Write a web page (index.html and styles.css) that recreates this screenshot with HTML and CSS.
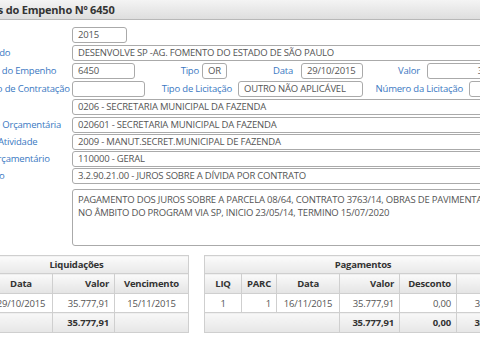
FILE: index.html
```html
<!DOCTYPE html>
<html lang="pt-BR">
<head>
    <meta charset="utf-8" />
    <title>Detalhes do Empenho</title>
    <link rel="stylesheet" href="styles.css">
</head>
<body>
    <div class="page">
        <div class="title-bar">Detalhes do Empenho Nº 6450</div>

        <div class="form">
            <div class="row">
                <span class="label">Ano</span>
                <span class="field w-year">2015</span>
            </div>
            <div class="row">
                <span class="label">Favorecido</span>
                <span class="field grow">DESENVOLVE SP -AG. FOMENTO DO ESTADO DE SÃO PAULO</span>
            </div>
            <div class="row">
                <span class="label">Número do Empenho</span>
                <span class="field w-emp">6450</span>
                <span class="label-in w-l1">Tipo</span>
                <span class="field w-tipo">OR</span>
                <span class="label-in w-l2">Data</span>
                <span class="field w-date">29/10/2015</span>
                <span class="label-in w-l3">Valor</span>
                <span class="field grow right">35.777,91</span>
            </div>
            <div class="row">
                <span class="label">Processo de Contratação</span>
                <span class="field w-mod"></span>
                <span class="label-in w-l4">Tipo de Licitação</span>
                <span class="field w-lic">OUTRO NÃO APLICÁVEL</span>
                <span class="label-in w-l5">Número da Licitação</span>
                <span class="field grow"></span>
            </div>
            <div class="row">
                <span class="label">Órgão</span>
                <span class="field grow">0206 - SECRETARIA MUNICIPAL DA FAZENDA</span>
            </div>
            <div class="row">
                <span class="label">Unidade Orçamentária</span>
                <span class="field grow">020601 - SECRETARIA MUNICIPAL DA FAZENDA</span>
            </div>
            <div class="row tight">
                <span class="label">Projeto/Atividade</span>
                <span class="field grow">2009 - MANUT.SECRET.MUNICIPAL DE FAZENDA</span>
            </div>
            <div class="row tight">
                <span class="label">Fonte Orçamentário</span>
                <span class="field grow">110000 - GERAL</span>
            </div>
            <div class="row tight">
                <span class="label">Elemento</span>
                <span class="field grow">3.2.90.21.00 - JUROS SOBRE A DÍVIDA POR CONTRATO</span>
            </div>
            <div class="row area-row">
                <span class="label">Objeto</span>
                <div class="field area grow">PAGAMENTO DOS JUROS SOBRE A PARCELA 08/64, CONTRATO 3763/14, OBRAS DE PAVIMENTAÇÃO<br>NO ÂMBITO DO PROGRAM VIA SP, INICIO 23/05/14, TERMINO 15/07/2020</div>
            </div>
        </div>

        <div class="tables">
            <table class="grid liq">
                <colgroup>
                    <col style="width:25px"><col style="width:63px"><col style="width:62px"><col style="width:74px">
                </colgroup>
                <tr class="caption"><th colspan="4">Liquidações</th></tr>
                <tr class="head"><th>Nº</th><th>Data</th><th class="right">Valor</th><th>Vencimento</th></tr>
                <tr class="data"><td>1</td><td>29/10/2015</td><td class="right">35.777,91</td><td>15/11/2015</td></tr>
                <tr class="foot"><td colspan="2"></td><td class="right">35.777,91</td><td></td></tr>
            </table>

            <table class="grid pag">
                <colgroup>
                    <col style="width:37px"><col style="width:32px"><col style="width:63px"><col style="width:60px"><col style="width:57px"><col style="width:65px">
                </colgroup>
                <tr class="caption"><th colspan="6">Pagamentos</th></tr>
                <tr class="head"><th>LIQ</th><th class="right">PARC</th><th>Data</th><th class="right">Valor</th><th class="right">Desconto</th><th class="right">Líquido</th></tr>
                <tr class="data"><td>1</td><td class="right">1</td><td>16/11/2015</td><td class="right">35.777,91</td><td class="right">0,00</td><td class="right">35.777,91</td></tr>
                <tr class="foot"><td colspan="3"></td><td class="right">35.777,91</td><td class="right">0,00</td><td class="right">35.777,91</td></tr>
            </table>
        </div>
    </div>
</body>
</html>
```

FILE: styles.css
```css
body {
    margin: 0;
    background: #fff;
    font-family: "Open Sans", Arial, sans-serif;
    font-size: 9.5px;
    letter-spacing: -0.2px;
    color: #444;
    overflow: hidden;
}
.page {
    margin-left: -70px;
    width: 595px;
}
.title-bar {
    height: 20px;
    line-height: 19px;
    box-sizing: border-box;
    padding-left: 26px;
    background: linear-gradient(#f4f4f4, #dedede);
    border-bottom: 1px solid #b8b8b8;
    font-size: 11px;
    font-weight: bold;
    color: #333;
}
.form {
    padding-top: 7px;
    display: flex;
    flex-direction: column;
}
.row {
    display: flex;
    align-items: flex-start;
}
.row + .row {
    margin-top: 2px;
}
.row.tight {
    margin-top: 1px;
}
.row.area-row {
    margin-top: 5px;
}
.label {
    width: 108px;
    padding-left: 34px;
    flex: none;
    color: #3a78c2;
    line-height: 16px;
    white-space: nowrap;
    overflow: hidden;
}
.label-in {
    flex: none;
    box-sizing: border-box;
    text-align: right;
    color: #3a78c2;
    line-height: 16px;
    white-space: nowrap;
}
.field {
    flex: none;
    box-sizing: border-box;
    height: 16px;
    line-height: 14px;
    padding: 0 5px;
    border: 1px solid #aaa;
    border-radius: 3px;
    background: #fff;
    color: #555;
    white-space: nowrap;
    overflow: hidden;
}
.field.grow {
    flex: 1;
}
.field.right {
    text-align: right;
}
.field.area {
    height: 57px;
    white-space: normal;
    line-height: 13px;
    padding-top: 3px;
}
.w-year { width: 55px; }
.w-emp { width: 63px; }
.w-tipo { width: 25px; }
.w-date { width: 62px; }
.w-mod { width: 73px; }
.w-lic { width: 125px; }
.w-l1 { width: 67px; padding-right: 3px; }
.w-l2 { width: 74px; padding-right: 8px; }
.w-l3 { width: 64px; padding-right: 7px; }
.w-l4 { width: 93px; padding-right: 6px; }
.w-l5 { width: 106px; padding-right: 6px; }

.tables {
    display: flex;
    gap: 15px;
    margin-top: 9px;
    padding-left: 34px;
}
.grid {
    border-collapse: collapse;
    table-layout: fixed;
    border: 1px solid #c4c4c4;
}
.grid th,
.grid td {
    border: 1px solid #cfcfcf;
    padding: 0 5px;
    text-align: center;
    white-space: nowrap;
    overflow: hidden;
}
.grid .right {
    text-align: right;
}
.caption th {
    height: 17px;
    background: linear-gradient(#fbfbfb, #e8e8e8);
    font-weight: bold;
    color: #333;
}
.head th {
    height: 19px;
    background: linear-gradient(#fafafa, #e4e4e4);
    font-weight: bold;
    color: #333;
}
.data td {
    height: 18px;
    color: #555;
}
.foot td {
    height: 19px;
    background: linear-gradient(#f8f8f8, #e6e6e6);
    font-weight: bold;
    color: #333;
}
```
